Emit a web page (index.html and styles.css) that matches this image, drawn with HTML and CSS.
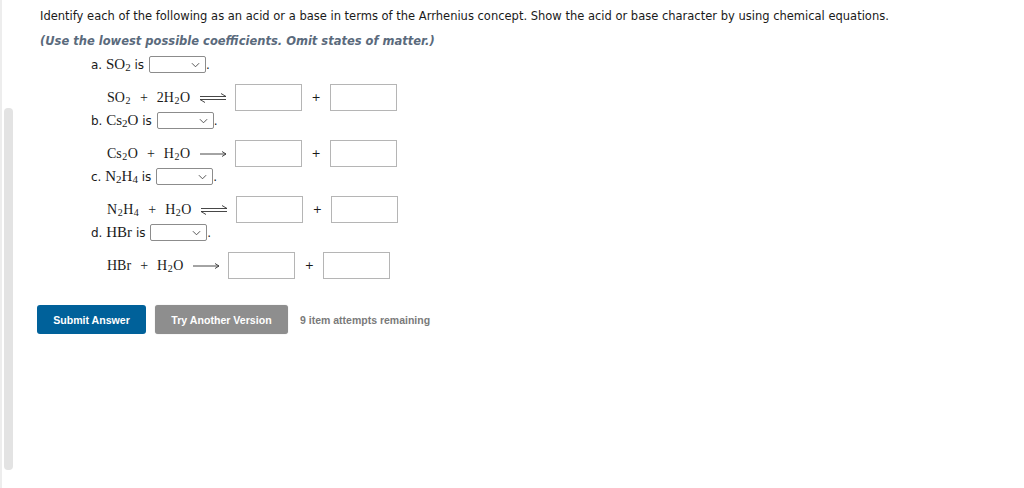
FILE: index.html
```html
<!DOCTYPE html>
<html>
<head>
<meta charset="utf-8">
<link rel="stylesheet" href="styles.css">
</head>
<body>
<div class="page">
  <div class="edge"></div>
  <div class="thumb"></div>
  <main class="content">
    <p class="intro">Identify each of the following as an acid or a base in terms of the Arrhenius concept. Show the acid or base character by using chemical equations.</p>
    <p class="note">(Use the lowest possible coefficients. Omit states of matter.)</p>

    <div class="q"><span>a. </span><span class="chem">SO<sub>2</sub></span><span> is </span><span class="sel"><svg viewBox="0 0 10 6" width="9" height="6"><path d="M1 1 L5 5 L9 1" fill="none" stroke="#444" stroke-width="1"/></svg></span><span>.</span></div>
    <div class="eq">
      <span class="chem">SO<sub>2</sub></span><span class="chem plus">+</span><span class="chem">2H<sub>2</sub>O</span>
      <svg class="arrow" viewBox="0 0 28 10" width="28" height="10"><path d="M1 3.5 H27 M27 3.5 L22 0.5 M1 6.5 H27 M1 6.5 L6 9.5" fill="none" stroke="#333" stroke-width="0.9"/></svg>
      <span class="box"></span><span class="bplus">+</span><span class="box"></span>
    </div>

    <div class="q"><span>b. </span><span class="chem">Cs<sub>2</sub>O</span><span> is </span><span class="sel"><svg viewBox="0 0 10 6" width="9" height="6"><path d="M1 1 L5 5 L9 1" fill="none" stroke="#444" stroke-width="1"/></svg></span><span>.</span></div>
    <div class="eq">
      <span class="chem">Cs<sub>2</sub>O</span><span class="chem plus">+</span><span class="chem">H<sub>2</sub>O</span>
      <svg class="arrow" viewBox="0 0 28 10" width="28" height="10"><path d="M1 5 H27 M27 5 L23 2.5 M27 5 L23 7.5" fill="none" stroke="#333" stroke-width="0.9"/></svg>
      <span class="box"></span><span class="bplus">+</span><span class="box"></span>
    </div>

    <div class="q"><span>c. </span><span class="chem">N<sub>2</sub>H<sub>4</sub></span><span> is </span><span class="sel"><svg viewBox="0 0 10 6" width="9" height="6"><path d="M1 1 L5 5 L9 1" fill="none" stroke="#444" stroke-width="1"/></svg></span><span>.</span></div>
    <div class="eq">
      <span class="chem">N<sub>2</sub>H<sub>4</sub></span><span class="chem plus">+</span><span class="chem">H<sub>2</sub>O</span>
      <svg class="arrow" viewBox="0 0 28 10" width="28" height="10"><path d="M1 3.5 H27 M27 3.5 L22 0.5 M1 6.5 H27 M1 6.5 L6 9.5" fill="none" stroke="#333" stroke-width="0.9"/></svg>
      <span class="box"></span><span class="bplus">+</span><span class="box"></span>
    </div>

    <div class="q"><span>d. </span><span class="chem">HBr</span><span> is </span><span class="sel"><svg viewBox="0 0 10 6" width="9" height="6"><path d="M1 1 L5 5 L9 1" fill="none" stroke="#444" stroke-width="1"/></svg></span><span>.</span></div>
    <div class="eq">
      <span class="chem">HBr</span><span class="chem plus">+</span><span class="chem">H<sub>2</sub>O</span>
      <svg class="arrow" viewBox="0 0 28 10" width="28" height="10"><path d="M1 5 H27 M27 5 L23 2.5 M27 5 L23 7.5" fill="none" stroke="#333" stroke-width="0.9"/></svg>
      <span class="box"></span><span class="bplus">+</span><span class="box"></span>
    </div>

    <div class="actions">
      <button class="btn submit">Submit Answer</button>
      <button class="btn another">Try Another Version</button>
      <span class="remaining">9 item attempts remaining</span>
    </div>
  </main>
</div>
</body>
</html>
```
FILE: styles.css
```css
html, body {
  margin: 0;
  padding: 0;
  background: #fff;
}
.page {
  display: flex;
  height: 488px;
  overflow: hidden;
}
.edge {
  width: 2px;
  background: #ededed;
  flex: none;
}
.thumb {
  width: 9px;
  margin-left: 2px;
  margin-top: 108px;
  height: 362px;
  background: #e3e3e3;
  border-radius: 4px;
  flex: none;
}
.content {
  padding-left: 27px;
  padding-top: 6px;
  font-family: "DejaVu Sans", Verdana, sans-serif;
  font-size: 11.5px;
  color: #1a1a1a;
}
.intro {
  margin: 0;
  line-height: 20px;
}
.note {
  margin: 5px 0 4px;
  line-height: 20px;
  font-weight: bold;
  font-style: italic;
  color: #5a6a7c;
}
.q {
  margin: 0 0 0 51px;
  height: 19px;
  display: flex;
  align-items: center;
  white-space: pre;
  font-size: 12px;
}
.chem {
  font-family: "Liberation Serif", "DejaVu Serif", serif;
  font-size: 15px;
}
.chem sub {
  font-size: 11px;
  vertical-align: -2px;
  line-height: 0;
}
.sel {
  width: 57px;
  height: 17px;
  box-sizing: border-box;
  border: 1px solid #8c8c8c;
  border-radius: 2px;
  display: flex;
  align-items: center;
  justify-content: flex-end;
  padding-right: 5px;
  margin-left: 1px;
}
.eq {
  margin: 10px 0 0 67px;
  height: 27px;
  display: flex;
  align-items: center;
}
.eq .chem {
  font-size: 14px;
}
.eq .chem sub {
  font-size: 10px;
  margin: 0 0.5px;
}
.plus {
  margin: 0 9px;
}
.arrow {
  margin: 0 8px 0 9px;
}
.box {
  width: 67px;
  height: 27px;
  box-sizing: border-box;
  border: 1px solid #b5b5b5;
  background: #fff;
}
.bplus {
  width: 28px;
  text-align: center;
  font-size: 11px;
}
.actions {
  margin-top: 26px;
  display: flex;
  align-items: center;
  margin-left: -3px;
}
.btn {
  height: 29px;
  border: none;
  border-radius: 3px;
  font-family: "Liberation Sans", Arial, sans-serif;
  font-weight: bold;
  font-size: 10.6px;
  color: #fff;
  padding: 0;
}
.submit {
  width: 109px;
  background: #00619a;
}
.another {
  width: 133px;
  margin-left: 9px;
  background: #8e8e8e;
  box-shadow: 0 0 1px rgba(0,0,0,0.3);
}
.remaining {
  margin-left: 12px;
  font-family: "Liberation Sans", Arial, sans-serif;
  font-weight: bold;
  font-size: 10.5px;
  color: #7a7a7a;
}
```
